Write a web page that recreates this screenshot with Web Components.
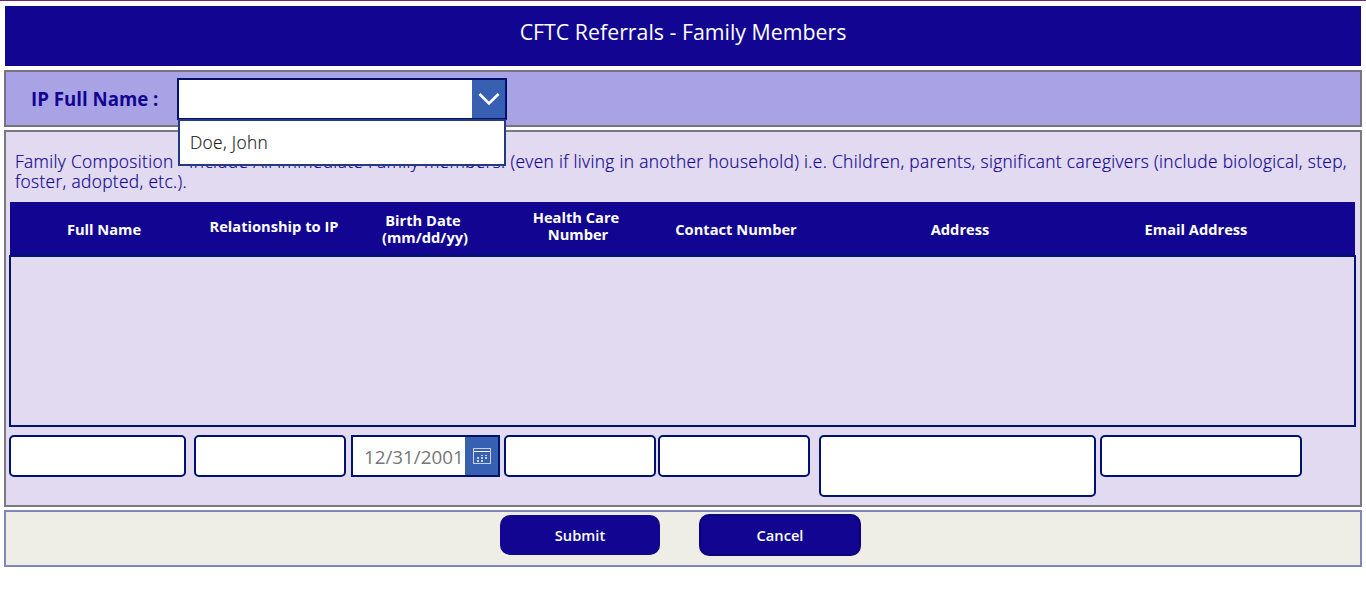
<!DOCTYPE html>
<html lang="en">
<head>
<meta charset="utf-8">
<title>CFTC Referrals - Family Members</title>
<style>
html, body { margin: 0; background: #fff; }
body { font-family: "Open Sans", sans-serif; }
</style>
</head>
<body>
<referral-app></referral-app>
<script>
const define = (name, html) => customElements.define(name, class extends HTMLElement {
  constructor() {
    super();
    const t = document.createElement('template');
    t.innerHTML = html;
    this.attachShadow({ mode: 'open' }).append(t.content.cloneNode(true));
  }
});

define('page-title', `<style>
:host { display: flex; justify-content: center; box-sizing: border-box; height: 60px; margin: 0 1px; padding-top: 11px; background: #110592; color: #fff; font-size: 21.33px; line-height: 30px; white-space: nowrap; }
</style><slot></slot>`);

define('text-box', `<style>
:host { display: block; box-sizing: border-box; height: 42px; background: #fff; border: 2px solid #00126b; border-radius: 5px; }
</style><slot></slot>`);

define('name-picker', `<style>
:host { display: flex; box-sizing: border-box; position: relative; width: 330px; height: 42px; border: 2px solid #00126b; background: #fff; }
.value { flex: 1; }
.arrow { width: 33px; background: #3860b2; }
svg { display: block; }
.menu { position: absolute; z-index: 2; left: -1px; top: 39px; box-sizing: border-box; width: 328px; height: 47px; border: 2px solid #233a82; background: #fff; color: #222; font-size: 17.33px; font-weight: 300; -webkit-text-stroke: .2px; letter-spacing: .33px; line-height: 24px; padding: 9px 10px 0; }
</style><div class="value"></div>
<div class="arrow"><svg width="33" height="38" viewBox="0 0 33 38"><path d="M7.5 14 17 23.500 26.500 14" fill="none" stroke="#fff" stroke-width="2.600"/></svg></div>
<div class="menu"><slot></slot></div>`);

define('name-bar', `<style>
:host { display: flex; box-sizing: border-box; height: 57px; border: 2px solid #77747f; background: #a9a2e4; padding: 6px 0 0 25px; }
.label { width: 146px; color: #110592; font-size: 18.67px; font-weight: 700; line-height: 41px; white-space: nowrap; }
.label span { display: inline-block; }
</style><div class="label"><span>IP Full Name :</span></div><name-picker><slot></slot></name-picker>`);

define('column-heads', `<style>
:host { display: grid; grid-template-columns: 188px 152px 150px 156px 160px 288px 184px; box-sizing: border-box; height: 53px; margin: 0 1px 0 1px; background: #110592; color: #fff; font-size: 14.67px; font-weight: 700; line-height: 17px; text-align: center; white-space: nowrap; }
</style><slot></slot>`);
define('column-head', `<style>
:host { display: block; padding-top: 19px; }
:host([raise]) { padding-top: 16px; }
:host([two]) { padding-top: 10px; }
:host([higher]) { padding-top: 7px; }
</style><slot></slot>`);

define('date-box', `<style>
:host { display: flex; box-sizing: border-box; height: 42px; border: 2px solid #00126b; background: #fff; }
.v { flex: 1; padding-left: 11px; color: #767676; font-size: 18.8px; line-height: 40px; white-space: nowrap; }
.b { width: 33px; background: #3860b2; }
svg { display: block; }
</style><div class="v"><slot></slot></div>
<div class="b"><svg width="33" height="38" viewBox="0 0 33 38" shape-rendering="crispEdges"><rect x="8.500" y="11.500" width="17" height="15" fill="none" stroke="#c8d3ea"/><path d="M9 14.500h16" stroke="#fff"/><path d="M16 18h2v1h-2zM20 18h2v1h-2zM12 20h2v2h-2zM16 20h2v2h-2zM20 20h2v2h-2zM12 23h2v2h-2zM16 23h2v2h-2z" fill="#c8d3ea"/></svg></div>`);

define('entry-row', `<style>
:host { display: grid; grid-template-columns: 177px 8px 152px 5px 149px 4px 152px 2px 152px 9px 277px 4px 202px; align-items: start; margin-top: 8px; }
.tall { height: 62px; }
</style><text-box></text-box><i></i><text-box></text-box><i></i><date-box>12/31/2001</date-box><i></i><text-box></text-box><i></i><text-box></text-box><i></i><text-box class="tall"></text-box><i></i><text-box></text-box>`);

define('family-panel', `<style>
:host { display: block; box-sizing: border-box; height: 377px; border: 2px solid #7b7880; background: #e2daf0; padding: 19px 4px 0 3px; }
.note { color: #110592; font-size: 17.33px; font-weight: 300; -webkit-text-stroke: .2px; line-height: 20px; letter-spacing: .345px; margin: 0 0 0 6px; height: 51px; white-space: nowrap; }
.list { box-sizing: border-box; height: 172px; border: 2px solid #00126b; }
column-head span { margin-right: 4px; }
</style><div class="note">Family Composition - Include All immediate Family members. (even if living in another household) i.e. Children, parents, significant caregivers (include biological, step,<br>foster, adopted, etc.).</div>
<column-heads>
<column-head>Full Name</column-head><column-head raise>Relationship to IP</column-head><column-head two><span>Birth Date</span><br>(mm/dd/yy)</column-head><column-head higher><span>Health Care</span><br>Number</column-head><column-head>Contact Number</column-head><column-head>Address</column-head><column-head>Email Address</column-head>
</column-heads>
<div class="list"></div>
<entry-row></entry-row>`);

define('action-button', `<style>
:host { display: block; box-sizing: border-box; width: 160px; height: 40px; border-radius: 10px; background: #110592; color: #fff; font-size: 14.67px; font-weight: 600; line-height: 40px; text-align: center; }
:host([outlined]) { width: 162px; height: 42px; border: 2px solid #0d0478; line-height: 38px; }
</style><slot></slot>`);

define('action-bar', `<style>
:host { display: flex; align-items: center; gap: 39px; box-sizing: border-box; height: 57px; border: 2px solid #8086b8; background: #efeee6; padding: 0 0 7px 494px; }
</style><slot></slot>`);

define('referral-app', `<style>
:host { display: block; box-sizing: border-box; height: 609px; border-top: 1px solid #742774; padding: 5px 4px 0; }
name-bar { margin-top: 4px; }
family-panel, action-bar { margin-top: 3px; }
</style>
<page-title>CFTC Referrals - Family Members</page-title>
<name-bar>Doe, John</name-bar>
<family-panel></family-panel>
<action-bar><action-button>Submit</action-button><action-button outlined>Cancel</action-button></action-bar>`);
</script>
</body>
</html>
